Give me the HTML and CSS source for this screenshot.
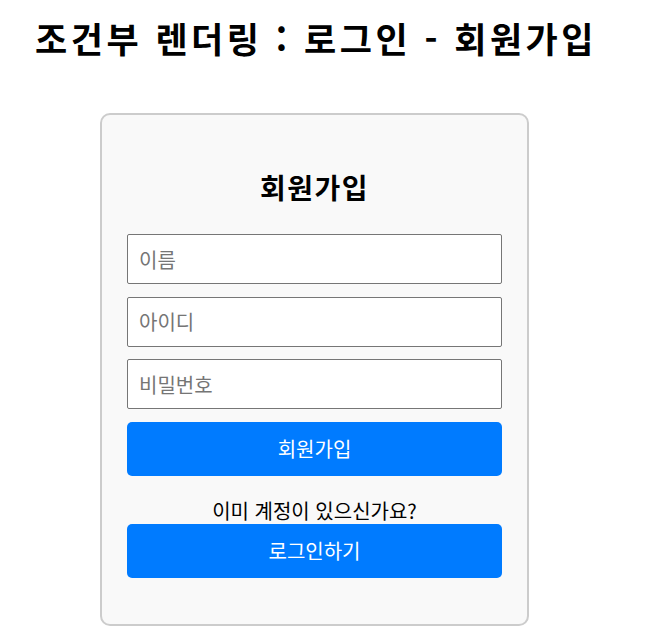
FILE: index.html
```html
<!DOCTYPE html>
<html lang="ko">
<head>
<meta charset="utf-8">
<link rel="stylesheet" href="styles.css">
</head>
<body>
<div class="app">
  <h1 class="title">조건부 렌더링 : 로그인 - 회원가입</h1>
  <div class="card">
    <h2 class="card-title">회원가입</h2>
    <form class="form">
      <input class="field" type="text" placeholder="이름">
      <input class="field" type="text" placeholder="아이디">
      <input class="field" type="password" placeholder="비밀번호">
      <button class="btn" type="button">회원가입</button>
    </form>
    <p class="switch-text">이미 계정이 있으신가요?</p>
    <button class="btn" type="button">로그인하기</button>
  </div>
</div>
</body>
</html>
```
FILE: styles.css
```css
* { box-sizing: border-box; }
body {
  margin: 8px;
  font-family: "Noto Sans CJK KR", "Noto Sans", sans-serif;
  background: #fff;
  color: #000;
}
.app { padding-left: 27px; }
.title {
  font-size: 35px;
  font-weight: 700;
  letter-spacing: 3.5px;
  margin: 6px 0 0 0;
  line-height: 48px;
}
.card {
  width: 429px;
  margin: 51px 0 0 65px;
  border: 2px solid #cccccc;
  border-radius: 10px;
  background: #f9f9f9;
  padding: 0 25px 46px;
  display: flex;
  flex-direction: column;
}
.card-title {
  text-align: center;
  font-size: 28px;
  font-weight: 700;
  letter-spacing: 1.5px;
  margin: 52px 0 27px;
  line-height: 40px;
}
.form {
  display: flex;
  flex-direction: column;
  gap: 12.5px;
}
.field {
  height: 50px;
  border: 1px solid #767676;
  border-radius: 2px;
  background: #fff;
  padding: 0 11px;
  font-family: inherit;
  font-size: 20px;
  color: #000;
}
.field::placeholder { color: #757575; }
.btn {
  height: 54px;
  border: none;
  border-radius: 5px;
  background: #007bff;
  color: #fff;
  font-family: inherit;
  font-size: 20px;
  cursor: pointer;
}
.switch-text {
  margin: 21px 0 0;
  text-align: center;
  font-size: 20px;
  line-height: 27px;
}
```
